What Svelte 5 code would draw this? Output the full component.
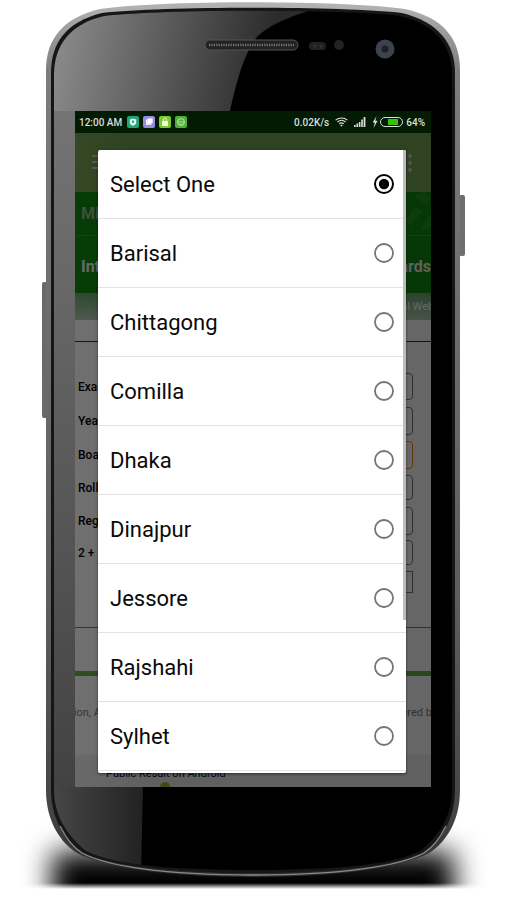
<script>
  let boards = ['Select One', 'Barisal', 'Chittagong', 'Comilla', 'Dhaka', 'Dinajpur', 'Jessore', 'Rajshahi', 'Sylhet'];
  let selected = 'Select One';

  let fields = [
    { label: 'Examination', h: 27, gap: 7 },
    { label: 'Year', h: 28, gap: 6 },
    { label: 'Board', h: 28, gap: 6, focus: true },
    { label: 'Roll', h: 25, gap: 7 },
    { label: 'Reg: No', h: 28, gap: 5 },
    { label: '2 + 6 =', h: 25, gap: 6 }
  ];

  const faceD = 'M54 75C54 45 70 24 104 16C165 9 340 9 400 16C435 24 452 45 452 75L452 790C452 815 440 835 420 851C395 864 340 870 253 870C166 870 111 864 86 851C66 835 54 815 54 790Z';
</script>

<div class="stage">
  <!-- phone body -->
  <svg class="body" width="506" height="900" viewBox="0 0 506 900">
    <defs>
      <linearGradient id="rim" x1="0" y1="0" x2="0" y2="1">
        <stop offset="0" stop-color="#b4b4b4" />
        <stop offset="0.08" stop-color="#7c7c7c" />
        <stop offset="0.7" stop-color="#5c5c5c" />
        <stop offset="0.93" stop-color="#444" />
        <stop offset="1" stop-color="#2a2a2a" />
      </linearGradient>
      <linearGradient id="glossTop" gradientUnits="userSpaceOnUse" x1="54" y1="60" x2="262" y2="100">
        <stop offset="0" stop-color="#8a8a8a" />
        <stop offset="1" stop-color="#2b2b2b" />
      </linearGradient>
      <linearGradient id="glossSide" gradientUnits="userSpaceOnUse" x1="0" y1="111" x2="0" y2="870">
        <stop offset="0" stop-color="#747474" />
        <stop offset="1" stop-color="#3c3c3c" />
      </linearGradient>
      <linearGradient id="glossLow" gradientUnits="userSpaceOnUse" x1="54" y1="0" x2="143" y2="0">
        <stop offset="0" stop-color="#464646" />
        <stop offset="1" stop-color="#222" />
      </linearGradient>
      <linearGradient id="shadowEnd" x1="0" y1="0" x2="0" y2="1">
        <stop offset="0" stop-color="#fff" stop-opacity="0" />
        <stop offset="1" stop-color="#fff" />
      </linearGradient>
      <clipPath id="face">
        <path d={faceD} />
      </clipPath>
      <filter id="blur" filterUnits="userSpaceOnUse" x="-40" y="780" width="586" height="120">
        <feGaussianBlur stdDeviation="14" />
      </filter>
    </defs>

    <rect x="52" y="852" width="402" height="70" fill="#000" filter="url(#blur)" />
    <rect x="0" y="883" width="506" height="6" fill="url(#shadowEnd)" />
    <rect x="0" y="889" width="506" height="11" fill="#fff" />

    <rect x="459" y="195" width="6" height="61" rx="2" fill="#6e6e6e" />
    <rect x="42" y="282" width="6" height="136" rx="2" fill="#6a6a6a" />

    <path d="M46 70C46 40 62 18 100 9C160 0 340 0 405 9C445 18 460 40 460 70L460 790C460 822 445 843 429 853C405 866 345 877 253 877C161 877 101 866 77 853C61 843 46 822 46 790Z" fill="url(#rim)" />
    <path d="M51 73C51 43 66 22 102 13C163 6 340 6 402 13C438 22 455 43 455 73L455 790C455 818 442 839 424 852C400 865 342 873 253 873C164 873 106 865 82 852C64 839 51 818 51 790Z" fill="#161616" />
    <path d="M60 826C66 838 74 848 82 853C106 866 164 875 253 875C342 875 400 866 424 853C432 848 440 838 446 826" fill="none" stroke="#8a8a8a" stroke-width="1.3" />
    <path d={faceD} fill="#000" />

    <g clip-path="url(#face)">
      <path d="M50 10L312 10C285 18 268 26 257 37C243 55 236 85 230 111L50 111Z" fill="url(#glossTop)" />
      <rect x="50" y="111" width="25" height="680" fill="url(#glossSide)" />
      <path d="M50 787L143 787L141 875L50 875Z" fill="url(#glossLow)" />
    </g>

    <!-- speaker, sensors, camera -->
    <rect x="205" y="40" width="93" height="10" rx="5" fill="#222" stroke="#555" stroke-width="1" />
    <line x1="209" y1="45" x2="294" y2="45" stroke="#777" stroke-width="2.5" stroke-dasharray="1.2 1.2" />
    <rect x="309" y="42" width="17" height="8" rx="4" fill="#222" />
    <circle cx="315" cy="46" r="1.5" fill="#333" />
    <circle cx="321" cy="46" r="1.5" fill="#333" />
    <circle cx="339" cy="45" r="5" fill="#222" />
    <circle cx="385" cy="49" r="9.5" fill="#3d434c" />
    <circle cx="385" cy="49" r="3.5" fill="#1e2024" />
  </svg>

  <div class="screen">
    <div class="status">
      <span class="clock">12:00 AM</span>
      <svg class="noti" width="60" height="12" viewBox="0 0 60 12">
        <rect x="0" width="12" height="12" rx="2" fill="#1ea67c" />
        <path d="M6 2.5L9.2 3.6V6.3C9.2 8 7.8 9.2 6 9.8C4.2 9.2 2.8 8 2.8 6.3V3.6Z" fill="#e8f6f0" />
        <circle cx="6" cy="5.8" r="1.2" fill="#1ea67c" />
        <rect x="16" width="12" height="12" rx="2" fill="#9a8be2" />
        <rect x="19" y="3.4" width="5.5" height="5.5" fill="#f1eefc" />
        <rect x="21" y="2.4" width="4.6" height="4.6" fill="#fff" />
        <rect x="32" width="12" height="12" rx="2" fill="#7ccb2e" />
        <rect x="35" y="5" width="6" height="5" rx="0.6" fill="#f4fbe8" />
        <path d="M36.4 5V3.8A1.6 1.6 0 0 1 39.6 3.8V5" fill="none" stroke="#f4fbe8" stroke-width="0.9" />
        <rect x="48" width="12" height="12" rx="2" fill="#4fb136" />
        <circle cx="54" cy="6" r="3.4" fill="none" stroke="#cfeac4" stroke-width="0.9" />
        <path d="M51 6H57M52.6 8H55.4" stroke="#cfeac4" stroke-width="0.7" />
      </svg>
      <span class="spacer"></span>
      <span class="speed">0.02K/s</span>
      <svg class="wifi" width="13" height="10" viewBox="0 0 13 10">
        <path d="M0.6 3.2C4 0.2 9 0.2 12.4 3.2M2.4 5C4.8 3 8.2 3 10.6 5M4.2 6.8C5.5 5.8 7.5 5.8 8.8 6.8" fill="none" stroke="#ddd" stroke-width="1.1" />
        <path d="M6.5 9.6L5.2 8.2C5.9 7.7 7.1 7.7 7.8 8.2Z" fill="#ddd" />
      </svg>
      <svg class="signal" width="13" height="10" viewBox="0 0 13 10">
        <rect x="0" y="8" width="1.6" height="2" fill="#ddd" />
        <rect x="2.4" y="6.5" width="1.6" height="3.5" fill="#ddd" />
        <rect x="4.8" y="5" width="1.6" height="5" fill="#ddd" />
        <rect x="7.2" y="2.5" width="1.6" height="7.5" fill="#ddd" />
        <rect x="9.6" y="0" width="1.8" height="10" fill="#ddd" />
      </svg>
      <svg class="bolt" width="6" height="12" viewBox="0 0 6 12">
        <path d="M4.6 0L0.6 6.6H2.8L1.6 12L5.6 4.8H3.2Z" fill="#ddd" />
      </svg>
      <svg class="batt" width="23" height="10" viewBox="0 0 23 10">
        <rect x="0.5" y="0.5" width="22" height="9" rx="4.5" fill="none" stroke="#ddd" stroke-width="1" />
        <path d="M8 2H18V8H8Z" fill="#39c108" />
      </svg>
      <span class="pct">64%</span>
    </div>

    <div class="appbar">
      <div class="burger"><i></i><i></i><i></i></div>
      <div class="dots"><i></i><i></i><i></i></div>
    </div>

    <div class="banner">
      <div class="brand">
        <span>Ministry of Education</span>
        <svg class="stripes" width="30" height="43" viewBox="0 0 30 43">
          <path d="M3 30L14 15L21 19L11 33Z M20 36L30 22L30 34L26 39Z M14 4L22 0L30 6L24 12Z" fill="#5bb45b" opacity="0.3" />
        </svg>
      </div>
      <div class="title"><span>Intermediate Results</span><span>All Education Boards</span></div>
    </div>
    <div class="ribbon"><span>Official Website</span></div>
    <div class="tabs"></div>

    <form class="form">
      {#each fields as f}
        <div class="field" style="height: {f.h}px; margin-bottom: {f.gap}px">
          <span class="lbl">{f.label}</span>
          <span class="input" class:focus={f.focus}></span>
        </div>
      {/each}
      <div class="field btnrow"><span class="btn"></span></div>
    </form>

    <div class="info">
      <div class="greenline"></div>
      <p><span class="copy">Education, All Rights Reserved</span><span class="power">Powered by</span></p>
    </div>

    <div class="foot">
      <span class="app">Public Result on Android</span>
      <span class="droid"></span>
    </div>

    <div class="scrim"></div>

    <div class="dialog">
      {#each boards as b}
        <div class="row">
          <span>{b}</span>
          <svg width="22" height="22" viewBox="0 0 22 22">
            {#if b === selected}
              <circle cx="11" cy="11" r="9" fill="none" stroke="#000" stroke-width="2" />
              <circle cx="11" cy="11" r="5.2" fill="#000" />
            {:else}
              <circle cx="11" cy="11" r="9" fill="none" stroke="#757575" stroke-width="1.8" />
            {/if}
          </svg>
        </div>
      {/each}
      <div class="thumb"></div>
    </div>
  </div>
</div>

<style>
  :global(body) {
    margin: 0;
    background: #fff;
  }
  .stage {
    position: relative;
    width: 506px;
    height: 900px;
    overflow: hidden;
    background: #fff;
    font-family: Roboto, sans-serif;
  }
  .body {
    position: absolute;
    left: 0;
    top: 0;
  }
  .screen {
    position: absolute;
    left: 75px;
    top: 111px;
    width: 356px;
    height: 676px;
    overflow: hidden;
    background: #fff;
    display: flex;
    flex-direction: column;
  }
  .status {
    height: 22px;
    flex: none;
    background: #021b02;
    position: relative;
    z-index: 2;
    display: flex;
    align-items: center;
    padding: 0 6px 0 4px;
    color: #ddd;
    font-size: 10px;
    font-weight: 500;
  }
  .noti {
    margin-left: 5px;
  }
  .spacer {
    flex: 1;
  }
  .wifi {
    margin-left: 6px;
  }
  .signal {
    margin-left: 6px;
  }
  .bolt {
    margin-left: 5px;
  }
  .batt {
    margin-left: 2px;
  }
  .pct {
    margin-left: 3px;
  }
  .appbar {
    height: 59px;
    flex: none;
    background: #75a452;
    display: flex;
    justify-content: space-between;
    padding: 22px 19px 0 17px;
    box-sizing: border-box;
  }
  .burger i {
    display: block;
    width: 18px;
    height: 2px;
    margin-bottom: 4px;
    background: #ccc;
  }
  .dots {
    margin-top: -1px;
  }
  .dots i {
    display: block;
    width: 4px;
    height: 4px;
    border-radius: 50%;
    margin-bottom: 3px;
    background: #ccc;
  }
  .banner {
    height: 101px;
    flex: none;
    background: #0f8a0f;
  }
  .brand {
    height: 43px;
    border-bottom: 1px solid #2c9a2c;
    display: flex;
    justify-content: space-between;
    align-items: center;
    padding-left: 6px;
    color: #8fb98f;
    font-weight: 700;
    font-size: 16px;
    white-space: nowrap;
  }
  .title {
    display: flex;
    justify-content: space-between;
    padding: 21px 0 0 6px;
    color: #eee;
    font-weight: 700;
    font-size: 16px;
    white-space: nowrap;
  }
  .ribbon {
    height: 27px;
    flex: none;
    background: linear-gradient(#68a868, #b8ccb8);
    display: flex;
    justify-content: flex-end;
    align-items: center;
    font-size: 11px;
    color: #fff;
    white-space: nowrap;
    overflow: hidden;
  }
  .ribbon span {
    margin-right: -21px;
  }
  .tabs {
    height: 21px;
    flex: none;
    background: #fff;
    border-bottom: 1px solid #333;
  }
  .form {
    height: 286px;
    flex: none;
    box-sizing: border-box;
    padding: 31px 18px 0 3px;
    border-bottom: 1px solid #777;
  }
  .field {
    display: flex;
    justify-content: space-between;
    align-items: center;
  }
  .lbl {
    font-size: 12px;
    font-weight: 500;
    color: #000;
  }
  .input {
    width: 220px;
    height: 100%;
    box-sizing: border-box;
    border: 1px solid #777;
    border-radius: 4px;
  }
  .input.focus {
    border-color: #e88a1a;
  }
  .btnrow {
    justify-content: flex-end;
    height: 22px;
  }
  .btn {
    width: 60px;
    height: 100%;
    box-sizing: border-box;
    border: 1px solid #777;
  }
  .info {
    flex: 1;
    overflow: hidden;
  }
  .greenline {
    height: 5px;
    margin-top: 43px;
    background: #6cb04a;
  }
  .info p {
    margin: 30px 0 0;
    display: flex;
    justify-content: space-between;
    font-size: 11px;
    color: #777;
    white-space: nowrap;
  }
  .copy {
    margin-left: -35px;
  }
  .power {
    margin-right: -6px;
  }
  .foot {
    height: 32px;
    flex: none;
    background: #f0f0f0;
    position: relative;
    font-size: 11px;
    color: #111;
  }
  .app {
    display: block;
    padding: 12px 0 0 31px;
  }
  .droid {
    position: absolute;
    left: 85px;
    top: 27px;
    width: 10px;
    height: 10px;
    border-radius: 50%;
    background: #a4b82c;
  }
  .scrim {
    position: absolute;
    inset: 0;
    z-index: 1;
    background: linear-gradient(90deg, rgba(0, 0, 0, 0.56), rgba(0, 0, 0, 0.6) 20%);
  }
  .dialog {
    position: absolute;
    z-index: 3;
    left: 23px;
    top: 39px;
    width: 308px;
    height: 623px;
    background: #fff;
    border-radius: 2px;
    overflow: hidden;
    box-shadow: 0 1px 3px rgba(0, 0, 0, 0.5);
  }
  .row {
    height: 68px;
    border-bottom: 1px solid #e2e2e2;
    display: flex;
    align-items: center;
    justify-content: space-between;
    padding: 0 11.5px 0 12px;
    font-size: 22px;
    color: #0a0a0a;
  }
  .row svg {
    margin-top: -1px;
  }
  .thumb {
    position: absolute;
    right: 0;
    top: 0;
    width: 3.5px;
    height: 470px;
    background: #bdbdbd;
  }
</style>
